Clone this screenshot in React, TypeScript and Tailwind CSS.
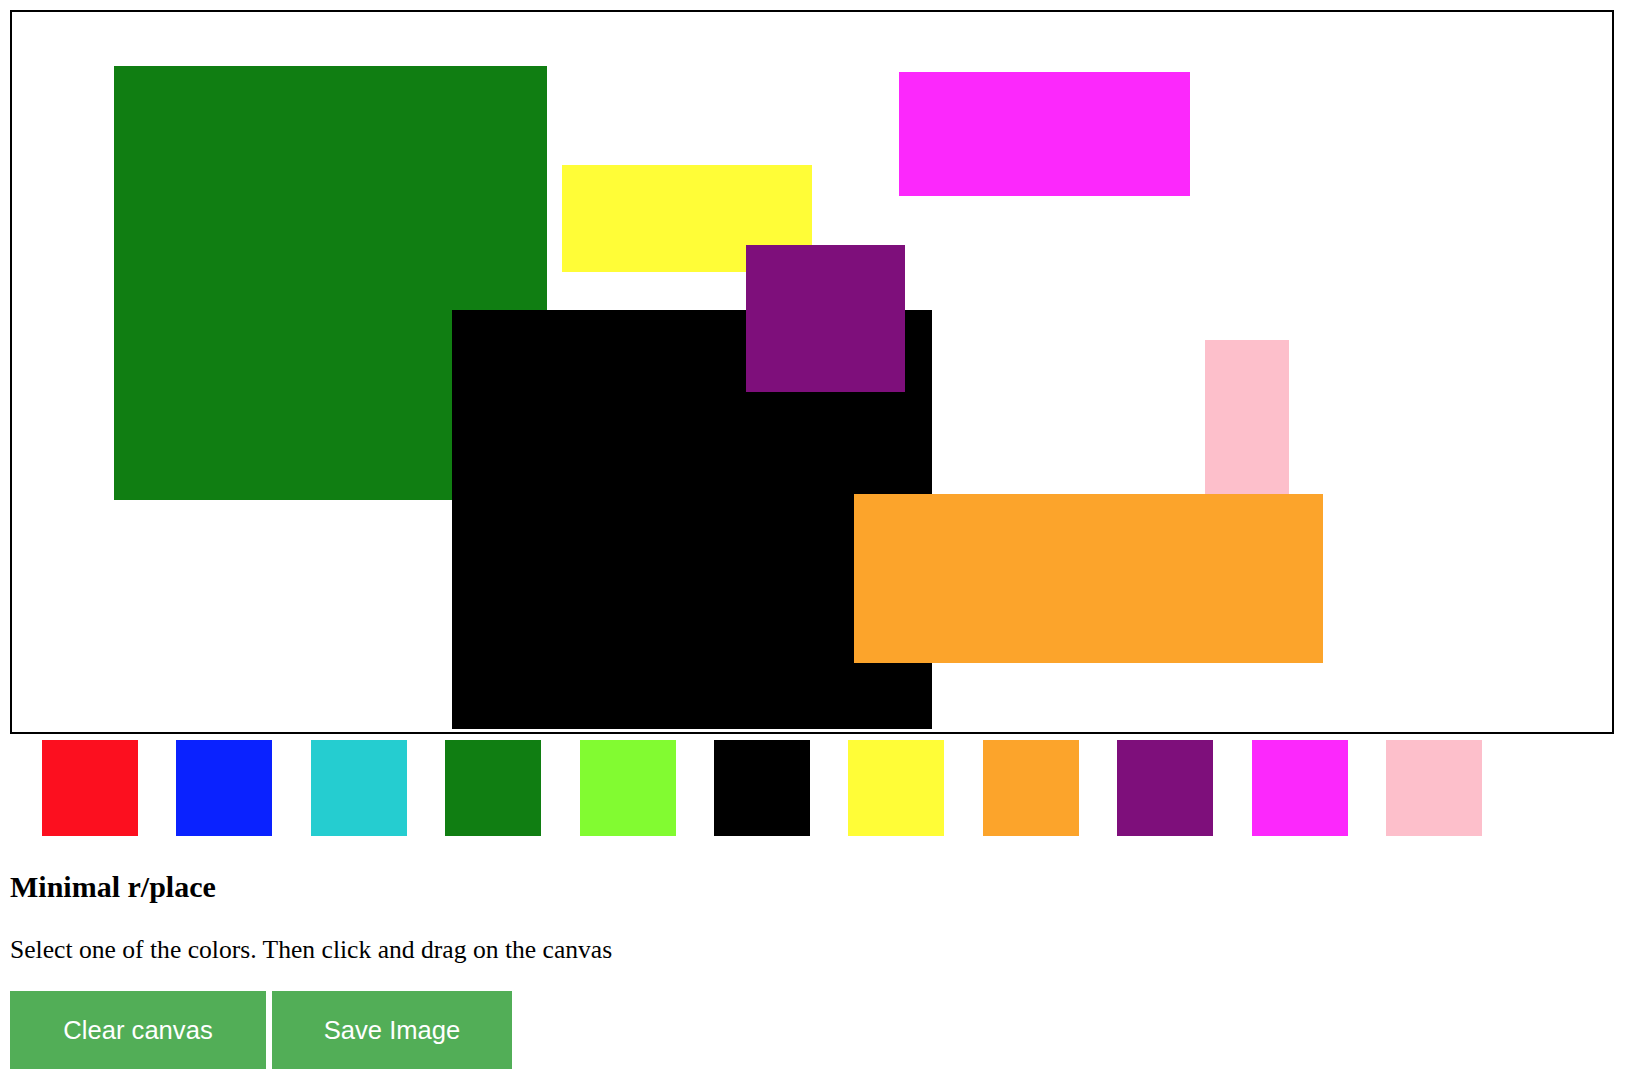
const palette = [
  "#fc0f1f",
  "#0a22ff",
  "#25cdd0",
  "#107e12",
  "#82fb31",
  "#000000",
  "#fffd37",
  "#fca42b",
  "#7e0f7b",
  "#fc28fc",
  "#fdbfcb",
];

// rectangles painted so far, in draw order
const strokes = [
  { x: 102, y: 54, w: 433, h: 434, color: "#107e12" },
  { x: 550, y: 153, w: 250, h: 107, color: "#fffd37" },
  { x: 887, y: 60, w: 291, h: 124, color: "#fc28fc" },
  { x: 440, y: 298, w: 480, h: 419, color: "#000000" },
  { x: 734, y: 233, w: 159, h: 147, color: "#7e0f7b" },
  { x: 1193, y: 328, w: 84, h: 154, color: "#fdbfcb" },
  { x: 842, y: 482, w: 469, h: 169, color: "#fca42b" },
];

const App = () => {
  return (
    <div className="bg-white min-h-screen pl-[10px] pt-[10px] font-['Liberation_Serif',serif] text-black">
      {/* CANVAS */}
      <div className="w-[1604px] h-[724px] border-2 border-black">
        <svg width="1600" height="720" className="block">
          <rect width="1600" height="720" fill="#ffffff" />
          {strokes.map((s, i) => (
            <rect key={i} x={s.x} y={s.y} width={s.w} height={s.h} fill={s.color} />
          ))}
        </svg>
      </div>
      {/* PALETTE */}
      <div className="flex gap-[38.4px] pl-[32px] mt-[6px]">
        {palette.map((c) => (
          <button
            key={c}
            className="w-[96px] h-[96px] shrink-0"
            style={{ backgroundColor: c }}
          />
        ))}
      </div>
      <h3 className="text-[30px] font-bold leading-[35px] mt-[33px]">Minimal r/place</h3>
      <p className="text-[25.6px] leading-[30px] mt-[31px]">
        Select one of the colors. Then click and drag on the canvas
      </p>
      {/* ACTIONS */}
      <div className="flex gap-[6px] mt-[26px]">
        <button className="bg-[#52ae57] text-white font-['Liberation_Sans',Arial,sans-serif] text-[25.6px] leading-[30px] h-[78px] w-[256px]">
          Clear canvas
        </button>
        <button className="bg-[#52ae57] text-white font-['Liberation_Sans',Arial,sans-serif] text-[25.6px] leading-[30px] h-[78px] w-[240px]">
          Save Image
        </button>
      </div>
    </div>
  );
};

export default App;
